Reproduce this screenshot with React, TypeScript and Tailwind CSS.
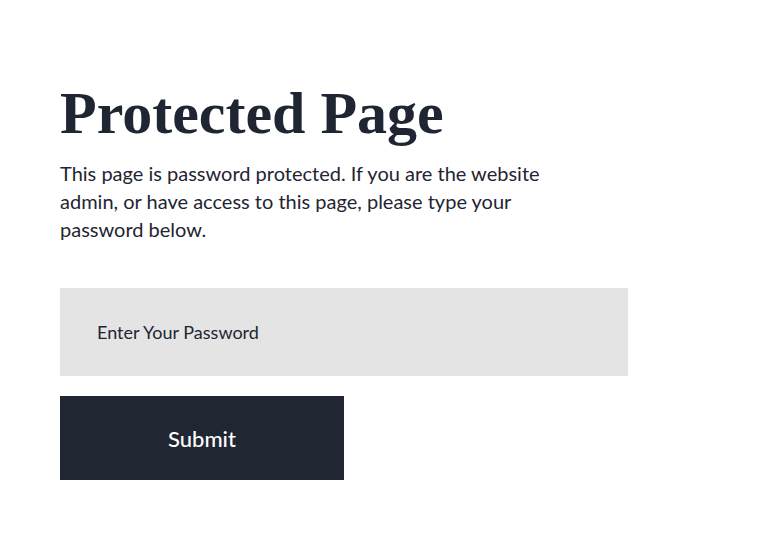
const App = () => {
  return (
    <div className="min-h-screen bg-white px-[60px] pt-[75px] text-[#1f2532]">
      {/* Heading */}
      <h1 className="font-['Liberation_Serif',serif] text-[60px] font-bold leading-[76px]">
        Protected Page
      </h1>

      {/* Description */}
      <p className="mt-[8px] w-[520px] font-['Lato',sans-serif] text-[20px] leading-[28px]">
        This page is password protected. If you are the website admin, or have access to this page, please type your password below.
      </p>

      {/* Form */}
      <form className="mt-[45px] flex flex-col gap-5" onSubmit={(e) => e.preventDefault()}>
        <input
          type="password"
          placeholder="Enter Your Password"
          className="h-[88px] w-[568px] bg-[#e4e4e4] px-[37px] font-['Lato',sans-serif] text-[18px] text-[#1f2532] outline-none placeholder:text-[#1f2532]"
        />
        <button
          type="submit"
          className="h-[84px] w-[284px] bg-[#202632] font-['Lato',sans-serif] text-[22px] font-medium text-white"
        >
          Submit
        </button>
      </form>
    </div>
  );
};

export default App;
